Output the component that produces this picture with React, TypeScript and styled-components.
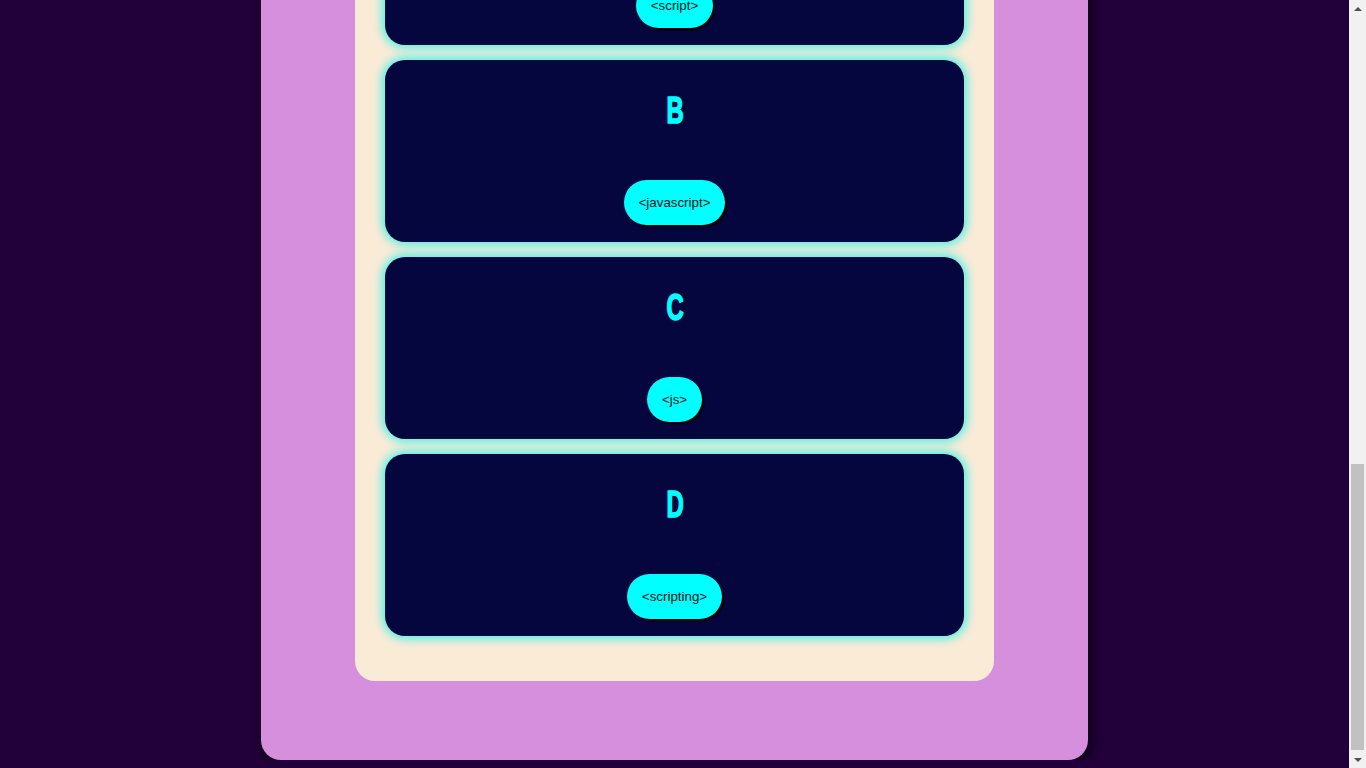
import React, { useLayoutEffect } from "react";
import styled, { createGlobalStyle } from "styled-components";

const Global = createGlobalStyle`
  html { overflow-y: scroll; }
  html::-webkit-scrollbar { display: none; }
  body {
    margin: 8px 25px 8px 8px;
    background: #22003a;
    font-family: "Liberation Sans", Arial, sans-serif;
  }
`;

const Shell = styled.main`
  width: 827px;
  margin: 0 auto;
  box-sizing: border-box;
  background: #d68fdc;
  border-radius: 20px;
  padding: 40px 94px 79px;
  box-shadow: 2px 4px 12px rgba(0, 0, 0, 0.85);
`;

const Title = styled.h1`
  margin: 0 0 30px;
  height: 60px;
  line-height: 60px;
  text-align: center;
  font-family: "Liberation Sans", sans-serif;
  font-size: 44px;
  color: #06063f;
`;

const Panel = styled.section`
  background: #faebd7;
  border-radius: 20px;
  padding: 30px 30px 45px;
`;

const Question = styled.div`
  height: 520px;
  margin-bottom: 60px;
  background: #06063f;
  border-radius: 20px;
  box-shadow: 0 0 10px 3px #4ff0e6;
  display: flex;
  align-items: center;
  justify-content: center;
  text-align: center;
  padding: 0 40px;
  color: #00ffff;
  font-size: 28px;
  font-weight: bold;
`;

const Intro = styled.p`
  margin: 0 0 60px;
  height: 166px;
  text-align: center;
  font-size: 18px;
  color: #22003a;
`;

const List = styled.div`
  display: flex;
  flex-direction: column;
  gap: 15px;
`;

const Card = styled.div`
  height: 182px;
  box-sizing: border-box;
  background: #06063f;
  border-radius: 20px;
  box-shadow: 0 0 10px 3px #4ff0e6;
  display: flex;
  flex-direction: column;
  align-items: center;
  padding: 30px 0 17px;
`;

const Letter = styled.h2`
  margin: 0;
  height: 42px;
  line-height: 42px;
  font-family: Impact, "Liberation Sans", sans-serif;
  font-weight: 900;
  font-size: 36px;
  color: #00ffff;
  -webkit-text-stroke: 1.4px #00ffff;
  text-shadow: 1px 0 #07a886;
  transform: scaleX(0.66);
`;

const Choice = styled.button`
  margin-top: auto;
  height: 45px;
  padding: 0 15px;
  border: none;
  border-radius: 25px;
  background: #00ffff;
  color: #111;
  font-family: "Liberation Sans", Arial, sans-serif;
  font-size: 13.33px;
  box-shadow: 2px 2px 2px #000;
  cursor: pointer;
`;

/* imitation of the browser's classic scrollbar, drawn over the page edge */
const Scrollbar = styled.div`
  position: fixed;
  top: 0;
  right: 0;
  width: 17px;
  height: 100vh;
  background: #f1f1f1;
  display: flex;
  flex-direction: column;
`;

const ArrowButton = styled.div<{ $dir: "up" | "down" }>`
  height: 17px;
  flex: none;
  display: flex;
  align-items: center;
  justify-content: center;
  &::before {
    content: "";
    width: 0;
    height: 0;
    border-left: 4px solid transparent;
    border-right: 4px solid transparent;
    ${(p) =>
      p.$dir === "up"
        ? "border-bottom: 4px solid #505050;"
        : "border-top: 4px solid #505050;"}
  }
`;

const Track = styled.div`
  flex: 1;
  display: flex;
  flex-direction: column;
  justify-content: flex-end;
  padding: 0 2px 1px;
`;

const Thumb = styled.div`
  height: 286px;
  background: #c1c1c1;
`;

const options = [
  { letter: "A", text: "<script>" },
  { letter: "B", text: "<javascript>" },
  { letter: "C", text: "<js>" },
  { letter: "D", text: "<scripting>" },
];

export default function App() {
  useLayoutEffect(() => {
    window.scrollTo(0, document.documentElement.scrollHeight);
  }, []);
  return (
    <>
      <Global />
      <Shell>
        <Title>JavaScript Quiz</Title>
        <Panel>
          <Question>Inside which HTML element do we put the JavaScript?</Question>
          <Intro>Choose one of the answers below.</Intro>
          <List>
            {options.map((o) => (
              <Card key={o.letter}>
                <Letter>{o.letter}</Letter>
                <Choice>{o.text}</Choice>
              </Card>
            ))}
          </List>
        </Panel>
      </Shell>
      <Scrollbar aria-hidden="true">
        <ArrowButton $dir="up" />
        <Track>
          <Thumb />
        </Track>
        <ArrowButton $dir="down" />
      </Scrollbar>
    </>
  );
}
